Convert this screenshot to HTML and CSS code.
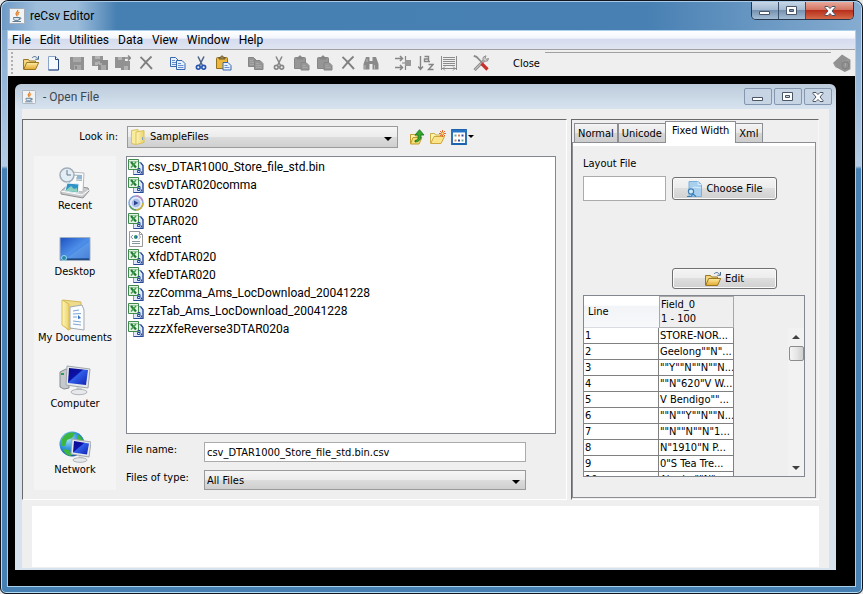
FILE: index.html
```html
<!DOCTYPE html>
<html lang="en">
<head>
  <meta charset="UTF-8"/>
  <meta name="viewport" content="width=device-width, initial-scale=1.0"/>
  <title>reCsv Editor</title>
  <link rel="stylesheet" href="styles.css">
</head>
<body>

<!-- shared icons -->
<svg class="defs" width="0" height="0" aria-hidden="true">
  <defs>
    <linearGradient id="gFolder" x1="0" y1="0" x2="0" y2="1"><stop offset="0" stop-color="#fdeea4"/><stop offset="1" stop-color="#e2a62c"/></linearGradient>
    <linearGradient id="gPale" x1="0" y1="0" x2="1" y2="0"><stop offset="0" stop-color="#fdf6bd"/><stop offset="1" stop-color="#ecd368"/></linearGradient>
    <linearGradient id="gScreen" x1="0" y1="0" x2="1" y2="1"><stop offset="0" stop-color="#1d4fc0"/><stop offset=".5" stop-color="#4d8fe8"/><stop offset="1" stop-color="#2a62c8"/></linearGradient>
    <linearGradient id="gNavy" x1="0" y1="0" x2="1" y2="1"><stop offset="0" stop-color="#0a0a8c"/><stop offset=".4" stop-color="#0d12a8"/><stop offset=".45" stop-color="#2f5fe8"/><stop offset="1" stop-color="#1220b4"/></linearGradient>
    <radialGradient id="gGlobe" cx=".35" cy=".3" r=".8"><stop offset="0" stop-color="#a8e4ff"/><stop offset=".5" stop-color="#2f92d8"/><stop offset="1" stop-color="#0b4c98"/></radialGradient>
    <linearGradient id="gGrey" x1="0" y1="0" x2="1" y2="1"><stop offset="0" stop-color="#fff"/><stop offset="1" stop-color="#b4b6ba"/></linearGradient>
  </defs>
  <symbol id="java" viewBox="0 0 16 16">
    <rect x=".5" y=".5" width="15" height="15" rx="1" fill="#f1f3f5" stroke="#a4adb6"/>
    <path d="M8.600 2c1.300 1.800-2.600 2.600-1.400 4.400.4.700 1 1.100.8 2M10.400 4.200c-1.800.9-2 1.700-1 2.800" fill="none" stroke="#e0791d" stroke-width="1.200"/>
    <path d="M4.500 9.500h6c0 2-.8 2.900-1.500 2.900H6c-1 0-1.500-1.300-1.500-2.900zM10.500 9.700c2-.6 2 1.700-.6 1.900M3.500 13.500h8.500" fill="#dfe8f0" stroke="#4f6f8c" stroke-width=".9"/>
  </symbol>
  <symbol id="open" viewBox="0 0 16 16">
    <path d="M.5 14V4.500h5l1 1.500h6v2" fill="#f4d67c" stroke="#9a7622"/>
    <path d="M.7 14.500l3-7h12l-3.200 7z" fill="url(#gFolder)" stroke="#9a7622"/>
    <path d="M9 3c1.500-2 4.500-2 5.500.6M15.500 1v3.300h-3.200" fill="none" stroke="#4d6f94"/>
  </symbol>
  <symbol id="new" viewBox="0 0 16 16">
    <path d="M2.500 1.500h7l3 3v10.500h-10z" fill="#f4f9ff" stroke="#8aa4cc"/>
    <path d="M9.500 1.500v3h3M12.500 4.500v10.500h-10" fill="none" stroke="#26457c"/>
  </symbol>
  <symbol id="save" viewBox="0 0 16 16">
    <path d="M1 2h14v13H2.500L1 13.500z" fill="#919191"/><path d="M4 2h8v5H4zM5 10h7v5H5z" fill="#a9a9a9"/><path d="M6 11h2v3H6z" fill="#888"/>
  </symbol>
  <symbol id="saveas" viewBox="0 0 16 16">
    <path d="M0 1h11v10H0z" fill="#949494"/><path d="M3 1h5v3H3zM3 7h3v3H3z" fill="#b4b4b4"/>
    <path d="M6 5h10v10H6z" fill="#8b8b8b"/><path d="M9 10h5v5H9z" fill="#aaa"/><path d="M7 6v3h3" fill="none" stroke="#ccc"/>
  </symbol>
  <symbol id="export" viewBox="0 0 16 16">
    <path d="M0 2h10v11H0zM6 6h9v9H6z" fill="#929292"/><path d="M3 2h4v3H3zM9 11h4v4H9z" fill="#b4b4b4"/>
    <path d="M9 3h6M13 .5L15.500 3 13 5.500" fill="none" stroke="#888" stroke-width="1.400"/>
  </symbol>
  <symbol id="del" viewBox="0 0 16 16">
    <path d="M2.500 2C6 5 10 9.500 14 14M13.500 1.500C9.500 5 6 9 2.500 13.500" fill="none" stroke="#808080" stroke-width="1.900"/>
  </symbol>
  <symbol id="copy" viewBox="0 0 16 16">
    <path class="sheet" d="M.5 2.500h5l3 3v6h-8z"/><path class="sheet" d="M6.500 5.500h5.500l3 3v6H6.500z"/>
    <path class="ink" d="M2 5.500h3M2 7.500h4M2 9.500h4M8 8.500h3M8 10.500h5.500M8 12.500h5.500"/>
  </symbol>
  <symbol id="cut" viewBox="0 0 16 16">
    <path class="blade" d="M5 1.500l4.500 9M11 1.500L6.500 10.500"/>
    <circle class="ring" cx="5.300" cy="12.300" r="1.900"/><circle class="ring" cx="10.700" cy="12.300" r="1.900"/>
  </symbol>
  <symbol id="paste" viewBox="0 0 16 16">
    <path class="board" d="M.5 3.500q0-1 1-1h9q1 0 1 1v10h-11z"/><path class="clip" d="M3 4V2.500h1.500C4.500.5 7.500.5 7.500 2.500H9V4z"/>
    <path class="sheet" d="M7 7.500h5l3 3v4.500H7z"/><path class="ink" d="M8.500 10.500h3M8.500 12.500h5"/>
  </symbol>
  <symbol id="find" viewBox="0 0 16 16">
    <path d="M3 2h3.500v4h3V2H13l2.500 7v5.500H9.500V9h-3v5.500H.5V9z" fill="#8a8a8a"/><path d="M2 10v4M11.500 10v4M4 4v3" stroke="#b8b8b8"/>
  </symbol>
  <symbol id="cols" viewBox="0 0 16 16">
    <path d="M0 3.500h7M5 1l2.500 2.500L5 6M0 12.500h7M5 10l2.500 2.500L5 15" fill="none" stroke="#858585" stroke-width="1.500"/>
    <path d="M10.500 1v14M7 8h9" stroke="#858585" stroke-width="1.200"/><path d="M10 5h6v6h-6z" fill="#999"/>
  </symbol>
  <symbol id="sort" viewBox="0 0 16 16">
    <path d="M2.500 1v13M0 11.500l2.500 3 2.500-3M6.500 1.500h4v5H6.500v-2.500h4M10.500 6.500h1.500M10.500 9.500h4.500l-4.500 5h5" fill="none" stroke="#858585" stroke-width="1.400"/>
  </symbol>
  <symbol id="lines" viewBox="0 0 16 16">
    <path d="M.5 1v14M15.500 1v14M2 2.500h12M2 4.500h12M2 6.500h12M2 8.500h12M2 10.500h12M1 13.500h14M4 11.500l-2 2 2 2M12 11.500l2 2-2 2" fill="none" stroke="#8c8c8c"/>
  </symbol>
  <symbol id="tools" viewBox="0 0 16 16">
    <path d="M1.500 15L11 5.500" stroke="#8c8c8c" stroke-width="3"/><path d="M1.800 14.700L11 5.500" stroke="#dadada"/>
    <path d="M10.500 2c-1.500 2.500.5 5 4 4l1-2.500-2.500.8-1-1L13 .8z" fill="#d8d8d8" stroke="#8c8c8c"/>
    <path d="M.8.800l2.700 1L9 7.500" fill="none" stroke="#8a8a8a" stroke-width="1.800"/><path d="M8.500 8.500l6 6" stroke="#c8302c" stroke-width="3.200"/>
  </symbol>
  <symbol id="tag" viewBox="0 0 16 16">
    <path d="M0 8l8-7.500 7.500 4.500v8.500l-5 2.500L3 12z" fill="#919191"/><path d="M8 7l7-2M3 12l-2-3" stroke="#9c9c9c"/><circle cx="11" cy="10" r="3" fill="none" stroke="#828282"/><path d="M11 8v3" stroke="#aaa"/>
  </symbol>
  <symbol id="folder" viewBox="0 0 16 16">
    <path d="M1.500 1.500L8 .5V13l-2 2.500-4.500-1z" fill="#f9ec9c" stroke="#d9c260"/>
    <path d="M6 3l8-1.500v12L6 15.500z" fill="url(#gPale)" stroke="#dcc258"/><path d="M12.500 8v3" stroke="#7fa3c0"/>
  </symbol>
  <symbol id="up" viewBox="0 0 16 16">
    <path d="M1.500 14V5.500h4l1 1.500h4v2" fill="#fdf3b0" stroke="#c39a2c"/><path d="M1.500 15l2.500-6.500h9l-3 6.500z" fill="#f8df76" stroke="#c39a2c"/>
    <path d="M6 11.500c3-.5 3.500-2 3-5.500H6L10.500.7 15 6h-3c.5 4-2 7-6 7z" fill="#35a52c" stroke="#14701a" stroke-width=".8"/>
  </symbol>
  <symbol id="newfolder" viewBox="0 0 16 16">
    <path d="M.5 14V4.500h4l1 1.500h6v2" fill="#fdf3b0" stroke="#d0ac48"/><path d="M.7 14.500L4 7.500h10.500l-3.500 7z" fill="#f9e48c" stroke="#d0a63c"/>
    <path d="M12.500 1v7M9 4.500h7M10 2l5 5M15 2l-5 5" stroke="#e0642c"/><circle cx="12.500" cy="4.500" r="1.200" fill="#ffe27a"/>
  </symbol>
  <symbol id="view" viewBox="0 0 16 16">
    <path d="M1 1h14v14H1z" fill="#fff" stroke="#1b63ae" stroke-width="1.800"/><path d="M1 1h14v2.500H1z" fill="#2674c4"/>
    <path d="M3.500 6.500h2M10.500 11.500h2" stroke="#6a9" stroke-width="2"/><path d="M7 6.500h2M3.500 11.500h2" stroke="#d77f5a" stroke-width="2"/><path d="M10.500 6.500h2M7 11.500h2" stroke="#2f4f9c" stroke-width="2"/>
  </symbol>
  <symbol id="csv" viewBox="0 0 16 16">
    <path d="M5.500 3.500h7l2.500 3v9H5.500z" fill="#dfe9fa" stroke="#7d9ad0"/><path d="M12.500 3.500l2.500 3v9H5.500" fill="none" stroke="#2c4a94" stroke-width="1.200"/>
    <path d="M.5.500h10v10H.5z" fill="#e6f3e4" stroke="#3f8a4c"/><path d="M1 2.500h9" stroke="#9ccaa0"/>
    <path d="M3 3l5 5.500" stroke="#1f7a33" stroke-width="2.200"/><path d="M8 3L3 8.500" stroke="#46a052" stroke-width="1.500"/>
    <path d="M9.500 9.500h2.500v4H9.500v-2h2.500M13.500 12.500v1.500l-1 1" fill="none" stroke="#24499c"/>
  </symbol>
  <symbol id="media" viewBox="0 0 16 16">
    <circle cx="8" cy="8" r="7" fill="#e4ebf8" stroke="#7d9fd8" stroke-width="1.500"/>
    <path d="M8 1a7 7 0 0 1 6.500 4.500" fill="none" stroke="#c48cc4" stroke-width="1.500"/><path d="M15 8a7 7 0 0 1-7 7" fill="none" stroke="#c8b830" stroke-width="1.500"/><path d="M8 15a7 7 0 0 1-6-4" fill="none" stroke="#58a458" stroke-width="1.500"/>
    <circle cx="8" cy="8" r="4.300" fill="#a9bde8"/><path d="M6 5.500l4.500 2.500-4.500 2.500z" fill="#2d4590"/>
  </symbol>
  <symbol id="xml" viewBox="0 0 16 16">
    <path d="M1.500.5h10l3 3v12h-13z" fill="#fff" stroke="#999"/><path d="M11.500.5v3h3" fill="none" stroke="#999"/>
    <path d="M5 4L2.800 6 5 8M10.500 4l2.200 2-2.200 2M4 10.500h8M4 12.500h8" fill="none" stroke="#8a9aa4"/><circle cx="7.800" cy="6" r="1.900" fill="#2f9c72"/><circle cx="8.500" cy="6" r=".9" fill="#2a59a8"/>
  </symbol>
  <symbol id="pick" viewBox="0 0 16 16">
    <path d="M3 .5h9l3.500 3v12H3z" fill="#a8d0ee" stroke="#7cb0d8"/><path d="M12 .5v3h3.500M3 10l5-4 7 1" fill="none" stroke="#d8edfa"/>
    <circle cx="5" cy="10.500" r="2.600" fill="#d4eafa" stroke="#3d7fb4" stroke-width="1.200"/><path d="M1 15.500h4l2-2.500 3 2.500" fill="none" stroke="#3d7fb4" stroke-width="1.200"/>
  </symbol>
  <symbol id="recent" viewBox="0 0 32 32">
    <path d="M2 24l7-6 20 3 1 3-6 7L2 27z" fill="#c9cacc" stroke="#8f9194"/><path d="M2 24l21 4 7-5" fill="none" stroke="#fff"/>
    <path d="M11 5l14 1-1 19-14-2z" fill="#fbfbfc" stroke="#b4b8bd"/><path d="M14 8l9 .5M17 11l6 .4M17 13l6 .4" stroke="#9aa"/><path d="M18 8l5 .5v4l-5-.5z" fill="#8fb7d8"/>
    <circle cx="8" cy="8" r="7" fill="#e3edf4" stroke="#a0adb8" stroke-width="1.500"/><path d="M8 3v5h4" fill="none" stroke="#62788a"/>
    <path d="M8 16l12 1-1 9-13-2z" fill="#2f93c8" stroke="#eef4f8"/><path d="M7 23l5-4 3 3 3-1v4l-12-1z" fill="#8fd0bc"/>
  </symbol>
  <symbol id="desktop" viewBox="0 0 32 32">
    <path d="M1 4.500h30v23H1z" fill="url(#gScreen)" stroke="#9fb0c4"/><path d="M2 25.500h28v1.500H2z" fill="#24497c"/><path d="M8 25l22-16v16z" fill="#7db4f2" opacity=".35"/>
    <circle cx="5" cy="25" r="2.500" fill="#2a86a8" stroke="#9ddcec"/>
  </symbol>
  <symbol id="docs" viewBox="0 0 32 32">
    <path d="M4 1l18 2v22L9 31l-5-5z" fill="#efdc8a" stroke="#d4b85a"/><path d="M11 8l12-2 2 5v20l-14-2z" fill="#fafcfe" stroke="#a3aab4"/>
    <path d="M14 12l6-1M14 15l8-.5M14 18l4 0M14 22l8 1M14 25l8 1" stroke="#7fa6d4"/><path d="M19 16l3 3-3 1z" fill="#2f73c0"/>
    <path d="M3 1l7 4v26l-7-5z" fill="url(#gPale)" stroke="#d8bc55"/>
  </symbol>
  <symbol id="computer" viewBox="0 0 32 32">
    <path d="M1 7l6-3 3 1v18l-5 1-4-2z" fill="#c6c9cc" stroke="#898d92"/><path d="M2 9h3" stroke="#2b9c50" stroke-width="2"/>
    <path d="M8 1l23 3-2 19-22-3z" fill="#e4e8ec" stroke="#a2a7ad"/><path d="M10 3l19 2-2 15-18-2z" fill="url(#gNavy)"/>
    <path d="M18 22l5 1-1 3h-6z" fill="#c8cbd0"/><ellipse cx="20" cy="27" rx="8" ry="2.700" fill="#e6e8ea" stroke="#b0b4b8"/>
  </symbol>
  <symbol id="network" viewBox="0 0 32 32">
    <circle cx="13" cy="13" r="12.500" fill="url(#gGlobe)"/><path d="M3 8c4-7 9-7 13-6l-3 5-5 2-2 6-4 0zM4 18l6 1 3 5-2 1c-4-1-6-4-7-7zM18 3c4 2 6 5 7 8l-6-2z" fill="#3eb53c"/>
    <path d="M13 8l19 3-2 15-18-3z" fill="#e4e8ec" stroke="#a2a7ad"/><path d="M15 10l15 2.500-2 11-14-2z" fill="url(#gNavy)"/>
    <path d="M20 25l4 1v2h-5z" fill="#c8cbd0"/><ellipse cx="21" cy="29" rx="7" ry="2.300" fill="#e6e8ea" stroke="#b0b4b8"/>
  </symbol>
  <symbol id="wmin" viewBox="0 0 14 12"><path d="M1.500 6.500h10v3h-10z" fill="#fff" stroke="#4a5568"/></symbol>
  <symbol id="wmax" viewBox="0 0 14 12"><path d="M1.500 1.500h10v8h-10zM4.500 4.500v2h4v-2z" fill="#fff" fill-rule="evenodd" stroke="#4a5568"/></symbol>
  <symbol id="wclose" viewBox="0 0 14 12"><path d="M2 1.500h3l2 2 2-2h3v1L9 6l3 3.500v1H9l-2-2-2 2H2v-1L5 6 2 2.500z" fill="#fff" stroke="#4a5568"/></symbol>
</svg>

<div class="window">
  <header class="titlebar">
    <svg class="icon"><use href="#java"/></svg>
    <h1>reCsv Editor</h1>
    <div class="win-buttons">
      <button aria-label="Minimize"><svg><use href="#wmin"/></svg></button>
      <button aria-label="Maximize"><svg><use href="#wmax"/></svg></button>
      <button class="close" aria-label="Close window"><svg><use href="#wclose"/></svg></button>
    </div>
  </header>

  <div class="client">
    <nav class="menubar">
      <button>File</button>
      <button>Edit</button>
      <button>Utilities</button>
      <button>Data</button>
      <button>View</button>
      <button>Window</button>
      <button>Help</button>
    </nav>

    <div class="toolbar">
      <span class="grip"></span>
      <div class="group">
        <button aria-label="Open"><svg class="icon"><use href="#open"/></svg></button>
        <button aria-label="New"><svg class="icon"><use href="#new"/></svg></button>
        <button aria-label="Save" disabled><svg class="icon"><use href="#save"/></svg></button>
        <button aria-label="Save as" disabled><svg class="icon"><use href="#saveas"/></svg></button>
        <button aria-label="Export" disabled><svg class="icon"><use href="#export"/></svg></button>
        <button aria-label="Delete" disabled><svg class="icon"><use href="#del"/></svg></button>
      </div>
      <div class="group">
        <button aria-label="Copy"><svg class="icon"><use href="#copy"/></svg></button>
        <button aria-label="Cut"><svg class="icon"><use href="#cut"/></svg></button>
        <button aria-label="Paste"><svg class="icon"><use href="#paste"/></svg></button>
      </div>
      <div class="group">
        <button aria-label="Copy records" disabled><svg class="icon"><use href="#copy"/></svg></button>
        <button aria-label="Cut records" disabled><svg class="icon"><use href="#cut"/></svg></button>
        <button aria-label="Paste records" disabled><svg class="icon"><use href="#paste"/></svg></button>
        <button aria-label="Paste records before" disabled><svg class="icon"><use href="#paste"/></svg></button>
        <button aria-label="Delete records" disabled><svg class="icon"><use href="#del"/></svg></button>
        <button aria-label="Find" disabled><svg class="icon"><use href="#find"/></svg></button>
      </div>
      <div class="group">
        <button aria-label="Filter" disabled><svg class="icon"><use href="#cols"/></svg></button>
        <button aria-label="Sort" disabled><svg class="icon"><use href="#sort"/></svg></button>
        <button aria-label="Column widths" disabled><svg class="icon"><use href="#lines"/></svg></button>
      </div>
      <div class="group">
        <button aria-label="Preferences"><svg class="icon"><use href="#tools"/></svg></button>
      </div>
      <button class="text-button">Close</button>
      <span class="rule"></span>
      <svg class="icon tag"><use href="#tag"/></svg>
    </div>

    <main class="desktop">
      <section class="frame">
        <div class="frame-title">
          <svg class="icon"><use href="#java"/></svg>
          <h2>- Open File</h2>
          <div class="frame-buttons">
            <button aria-label="Minimize frame"><svg><use href="#wmin"/></svg></button>
            <button aria-label="Maximize frame"><svg><use href="#wmax"/></svg></button>
            <button aria-label="Close frame"><svg><use href="#wclose"/></svg></button>
          </div>
        </div>

        <div class="frame-body">
          <div class="split">
            <form class="chooser">
              <div class="look-row">
                <label for="look">Look in:</label>
                <div class="combo look">
                  <svg class="icon"><use href="#folder"/></svg>
                  <select id="look"><option>SampleFiles</option></select>
                </div>
                <div class="look-tools">
                  <button type="button" aria-label="Up one level"><svg class="icon"><use href="#up"/></svg></button>
                  <button type="button" aria-label="New folder"><svg class="icon"><use href="#newfolder"/></svg></button>
                  <button type="button" class="view" aria-label="View menu"><svg class="icon"><use href="#view"/></svg></button>
                </div>
              </div>

              <div class="places">
                <a href="#"><svg><use href="#recent"/></svg>Recent</a>
                <a href="#"><svg><use href="#desktop"/></svg>Desktop</a>
                <a href="#"><svg><use href="#docs"/></svg>My Documents</a>
                <a href="#"><svg><use href="#computer"/></svg>Computer</a>
                <a href="#"><svg><use href="#network"/></svg>Network</a>
              </div>

              <ul class="files">
                <li><svg class="icon"><use href="#csv"/></svg>csv_DTAR1000_Store_file_std.bin</li>
                <li><svg class="icon"><use href="#csv"/></svg>csvDTAR020comma</li>
                <li><svg class="icon"><use href="#media"/></svg>DTAR020</li>
                <li><svg class="icon"><use href="#csv"/></svg>DTAR020</li>
                <li><svg class="icon"><use href="#xml"/></svg>recent</li>
                <li><svg class="icon"><use href="#csv"/></svg>XfdDTAR020</li>
                <li><svg class="icon"><use href="#csv"/></svg>XfeDTAR020</li>
                <li><svg class="icon"><use href="#csv"/></svg>zzComma_Ams_LocDownload_20041228</li>
                <li><svg class="icon"><use href="#csv"/></svg>zzTab_Ams_LocDownload_20041228</li>
                <li><svg class="icon"><use href="#csv"/></svg>zzzXfeReverse3DTAR020a</li>
              </ul>

              <div class="fields">
                <label for="fname">File name:</label>
                <input id="fname" type="text" value="csv_DTAR1000_Store_file_std.bin.csv">
                <label for="ftype">Files of type:</label>
                <div class="combo">
                  <select id="ftype"><option>All Files</option></select>
                </div>
              </div>
            </form>

            <div class="options">
              <div class="tabs" role="tablist">
                <button role="tab">Normal</button>
                <button role="tab">Unicode</button>
                <button role="tab" class="active" aria-selected="true">Fixed Width</button>
                <button role="tab">Xml</button>
              </div>
              <div class="tab-pane">
                <label for="layout">Layout File</label>
                <div class="layout-row">
                  <input id="layout" type="text">
                  <button class="push"><svg class="icon"><use href="#pick"/></svg>Choose File</button>
                </div>
                <div class="edit-row">
                  <button class="push edit"><svg class="icon"><use href="#open"/></svg>Edit</button>
                </div>

                <div class="preview">
                  <table>
                    <thead>
                      <tr><th>Line</th><th class="field">Field_0<br>1 - 100</th></tr>
                    </thead>
                    <tbody>
                      <tr><td>1</td><td>STORE-NOR...</td></tr>
                      <tr><td>2</td><td>Geelong""N"...</td></tr>
                      <tr><td>3</td><td>""Y""N""N""N...</td></tr>
                      <tr><td>4</td><td>""N"620"V W...</td></tr>
                      <tr><td>5</td><td>V Bendigo""...</td></tr>
                      <tr><td>6</td><td>""N""Y""N""N...</td></tr>
                      <tr><td>7</td><td>""N""N""N"1...</td></tr>
                      <tr><td>8</td><td>N"1910"N P...</td></tr>
                      <tr><td>9</td><td>0"S Tea Tre...</td></tr>
                      <tr><td>10</td><td>Akorba""N"...</td></tr>
                    </tbody>
                  </table>
                  <div class="scrollbar">
                    <span class="arrow up"></span>
                    <span class="thumb"></span>
                    <span class="arrow down"></span>
                  </div>
                </div>
              </div>
            </div>
          </div>
          <div class="messages"></div>
        </div>
      </section>
    </main>
  </div>
</div>

</body>
</html>
```

FILE: styles.css
```css
* {
  box-sizing: border-box;
}

body {
  margin: 0;
  background: #e8e8e8;
  font-family: "DejaVu Sans Condensed", "Liberation Sans", sans-serif;
  font-size: 11px;
  color: #000;
}

button, input, select {
  font: inherit;
  color: inherit;
}

button {
  padding: 0;
  border: none;
  background: none;
}

h1, h2, ul {
  margin: 0;
  padding: 0;
  font-weight: normal;
}

.defs {
  position: absolute;
}

.icon {
  width: 16px;
  height: 16px;
  flex: none;
}

/* main window */
.window {
  display: flex;
  flex-direction: column;
  height: 100vh;
  min-height: 594px;
  padding: 0 6px 6px;
  border: 1px solid #10151f;
  border-radius: 8px 8px 6px 6px;
  background: linear-gradient(to bottom, #7ba3cc 0, #b4cce4 165px, #467fb2 168px, #467fb2 100%);
  box-shadow: inset 0 0 0 1px #b4dcf4;
}

.titlebar {
  display: flex;
  align-items: center;
  height: 29px;
  margin: 0 -5px;
  padding: 0 7px 0 7px;
  gap: 5px;
  border-top: 1px solid #a8cce8;
  border-radius: 7px 7px 0 0;
  background: linear-gradient(to right, #6f9ac6 0, #9dbddb 35px, #9dbddb 75px, #467fb2 115px, #4880b3 75%, #86acd0 100%);
  flex: none;
}

.titlebar h1 {
  flex: 1;
  font-family: Roboto, "Open Sans", sans-serif;
  font-size: 12px;
}

.win-buttons {
  display: flex;
  align-self: flex-start;
  border: 1px solid #26364c;
  border-top: none;
  border-radius: 0 0 5px 5px;
  overflow: hidden;
}

.win-buttons button {
  display: flex;
  align-items: center;
  justify-content: center;
  width: 27px;
  height: 17px;
  border-right: 1px solid #3b5068;
  background: linear-gradient(to bottom, #c6d6e6 0, #a2b9d0 48%, #7592b0 50%, #a4bdd6 100%);
}

.win-buttons .close {
  width: 47px;
  border-right: none;
  background: linear-gradient(to bottom, #e8aa9c 0, #d2705e 48%, #b8301c 50%, #d46a48 100%);
}

.win-buttons svg, .frame-buttons svg {
  width: 14px;
  height: 12px;
}

.client {
  display: flex;
  flex-direction: column;
  flex: 1;
  min-height: 0;
  border: 1px solid #1d3854;
  outline: 1px solid #a8d0ec;
  outline-offset: -1px;
  background: #efefef;
}

.menubar {
  display: flex;
  gap: 9px;
  height: 19px;
  padding: 0 4px;
  background: linear-gradient(to bottom, #fff 0, #f2f5fb 40%, #d5dcef 45%, #e0e4f2 100%);
  border-bottom: 1px solid #a0a0a0;
  font-family: Roboto, "Open Sans", sans-serif;
  font-size: 12px;
  line-height: 18px;
  flex: none;
}

/* toolbar */
.toolbar {
  display: flex;
  align-items: center;
  gap: 9px;
  height: 26px;
  padding-right: 4px;
  background: #efefef;
  flex: none;
}

.toolbar .group {
  display: flex;
}

.toolbar .group button {
  display: flex;
  justify-content: center;
  width: 23px;
}

.grip {
  width: 3px;
  height: 22px;
  margin-left: 3px;
  margin-right: -4px;
  border-left: 2px dotted #b0b0b0;
}

.text-button {
  margin: 0 -4px 0 12px;
}

.rule {
  flex: 1;
  align-self: flex-start;
  height: 1px;
  margin-top: 2px;
  margin-right: -7px;
  background: #a0a0a0;
}

.tag {
  width: 18px;
  height: 18px;
}

.sheet { fill: var(--sheet, #e6f0fc); stroke: var(--edge, #3a68b0); }
.ink { stroke: var(--ink, #6a90cc); fill: none; }
.blade { fill: none; stroke: var(--edge, #4c6288); stroke-width: 1.5px; }
.ring { fill: none; stroke: var(--edge, #2454b0); stroke-width: 1.6px; }
.board { fill: var(--sheet, #ecb83c); stroke: var(--edge, #94701e); }
.clip { fill: var(--edge, #a08850); stroke: var(--edge, #6c5a30); }

button:disabled {
  --sheet: #969696;
  --edge: #868686;
  --ink: #a8a8a8;
}

/* internal frame */
.desktop {
  display: flex;
  flex: 1;
  min-height: 0;
  padding: 8px 19px 16px 7px;
  background: #000;
}

.frame {
  display: flex;
  flex-direction: column;
  flex: 1;
  min-width: 0;
  padding: 0 7px 2px;
  border-radius: 6px 6px 0 0;
  background: linear-gradient(to bottom, #bccbdb 0, #d8e4f0 26px, #d6e3ef 100%);
}

.frame-title {
  display: flex;
  align-items: center;
  gap: 8px;
  height: 25px;
  flex: none;
}

.frame-title .icon {
  width: 14px;
  height: 14px;
  margin-right: -1px;
}

.frame-title h2 {
  flex: 1;
  font-family: Roboto, "Open Sans", sans-serif;
  font-size: 12px;
  color: #3c4650;
}

.frame-buttons {
  display: flex;
  gap: 2px;
  margin-right: -3px;
}

.frame-buttons button {
  display: flex;
  align-items: center;
  justify-content: center;
  width: 28px;
  height: 17px;
  border: 1px solid #8496b0;
  border-radius: 2px;
  background: #c6d4e4;
}

.frame-body {
  display: flex;
  flex-direction: column;
  flex: 1;
  min-height: 0;
  gap: 6px;
  padding: 10px 10px 1px 0;
  background: #efefef;
}

.split {
  display: flex;
  gap: 4px;
  flex: 1;
  min-height: 0;
}

.messages {
  height: 61px;
  margin-left: 10px;
  background: #fff;
  flex: none;
}

/* file chooser */
.chooser {
  display: grid;
  grid-template-columns: 82px 1fr;
  grid-template-rows: 23px 1fr 48px;
  column-gap: 10px;
  row-gap: 8px;
  flex: 1;
  min-width: 0;
  padding: 5px 10px 9px 11px;
  border: 1px solid #696969;
  border-right-color: #fff;
  border-bottom-color: #fff;
}

.look-row {
  grid-column: 1 / 3;
  display: flex;
  align-items: center;
  gap: 9px;
}

.look-row label {
  width: 84px;
  text-align: right;
}

.combo {
  position: relative;
  display: flex;
  align-items: center;
  border: 1px solid #9a9a9a;
  background: linear-gradient(to bottom, #f6f6f6 0, #ebebeb 50%, #dcdcdc 52%, #cfcfcf 100%);
}

.combo.look {
  width: 271px;
  height: 22px;
  padding-left: 2px;
}

.combo::after {
  content: "";
  position: absolute;
  right: 5px;
  top: 50%;
  border: 4px solid transparent;
  border-top-color: #000;
  border-bottom: none;
  pointer-events: none;
}

.combo select {
  flex: 1;
  height: 100%;
  padding: 0 16px 0 2px;
  border: none;
  background: none;
  appearance: none;
}

.combo.look select {
  padding-left: 4px;
}

.look-tools {
  display: flex;
  gap: 5px;
  margin-left: 2px;
}

.look-tools button {
  display: flex;
  align-items: center;
}

.look-tools .view::after {
  content: "";
  margin-left: 1px;
  border: 3px solid transparent;
  border-top-color: #000;
  border-bottom: none;
}

.places {
  grid-row: 2 / 4;
  display: flex;
  flex-direction: column;
  gap: 20px;
  padding-top: 11px;
  background: #f4f4f4;
}

.places a {
  display: flex;
  flex-direction: column;
  align-items: center;
  height: 46px;
  color: #000;
  line-height: 14px;
  text-decoration: none;
  white-space: nowrap;
}

.places svg {
  width: 32px;
  height: 32px;
  flex: none;
}

.files {
  min-height: 0;
  padding: 1px;
  border: 1px solid #828790;
  background: #fff;
  list-style: none;
  overflow: hidden;
  font-family: Roboto, "Open Sans", sans-serif;
  font-size: 12px;
}

.files li {
  display: flex;
  align-items: center;
  gap: 4px;
  height: 18px;
  line-height: 18px;
}

.fields {
  display: grid;
  grid-template-columns: 78px 322px;
  grid-template-rows: 20px 20px;
  row-gap: 8px;
}

.fields label {
  line-height: 16px;
}

.fields input, .layout-row input {
  min-width: 0;
  padding: 0 2px;
  border: 1px solid #ababab;
  background: #fff;
}

/* right hand options */
.options {
  display: flex;
  flex-direction: column;
  width: 248px;
  padding: 1px 2px 1px 0;
  border: 1px solid #696969;
  border-right-color: #f8f8f8;
  border-bottom-color: #fff;
}

.tabs {
  display: flex;
  align-items: flex-end;
  height: 21px;
  padding-left: 2px;
  flex: none;
}

.tabs button {
  height: 19px;
  padding: 0 3px;
  border: 1px solid #8c8e94;
  border-bottom: none;
  background: linear-gradient(to bottom, #f4f4f4 0, #e8e8e8 50%, #d6d6d6 52%, #cdcdcd 100%);
}

.tabs .active {
  z-index: 1;
  height: 22px;
  margin: 0 -1px -1px;
  padding: 0 6px 4px;
  background: #fff;
}

.tab-pane {
  display: flex;
  flex-direction: column;
  flex: 1;
  min-height: 0;
  padding: 13px 10px 20px;
  border: 1px solid #8c8e94;
  box-shadow: inset 0 3px #fff;
}

.tab-pane > label {
  line-height: 16px;
}

.layout-row {
  display: flex;
  align-items: center;
  gap: 6px;
  margin-top: 4px;
}

.layout-row input {
  width: 83px;
  height: 25px;
}

.push {
  display: flex;
  align-items: center;
  justify-content: center;
  gap: 4px;
  width: 105px;
  height: 23px;
  border: 1px solid #707070;
  border-radius: 3px;
  background: linear-gradient(to bottom, #f4f4f4 0, #ececec 48%, #dedede 50%, #d0d0d0 100%);
  box-shadow: inset 0 0 0 1px #fafafa;
}

.push.edit {
  height: 21px;
}

.edit-row {
  display: flex;
  margin: 67px 0 6px;
  padding-left: 89px;
}

.preview {
  display: flex;
  justify-content: space-between;
  flex: 1;
  min-height: 0;
  border: 1px solid #828790;
  overflow: hidden;
}

.preview table {
  width: 150px;
  height: max-content;
  table-layout: fixed;
  border-collapse: separate;
  border-spacing: 0;
}

.preview th {
  height: 32px;
  padding: 0 4px;
  border-bottom: 1px solid #d8dce2;
  background: linear-gradient(to bottom, #fff 0, #fff 30%, #f2f4f7 32%, #f6f8fa 100%);
  font-weight: normal;
  text-align: left;
  line-height: 14px;
}

.preview th.field {
  padding: 0 1px;
  border: 1px solid #a8a8a8;
  background: #efefef;
}

.preview td {
  height: 16px;
  padding: 0 0 0 1px;
  border-right: 1px solid #808080;
  border-bottom: 1px solid #808080;
  background: #fff;
  line-height: 15px;
  white-space: nowrap;
  overflow: hidden;
}

.scrollbar {
  display: flex;
  flex-direction: column;
  align-items: center;
  width: 16px;
  margin-top: 32px;
  padding-bottom: 6px;
  background: #f2f2f2;
}

.arrow {
  border: 4px solid transparent;
}

.arrow.up {
  margin: 7px 0 7px;
  border-top: none;
  border-bottom-color: #404040;
}

.arrow.down {
  margin-top: auto;
  border-bottom: none;
  border-top-color: #404040;
}

.thumb {
  width: 15px;
  height: 15px;
  border: 1px solid #8c8c8c;
  border-radius: 2px;
  background: linear-gradient(to right, #f4f4f4 0, #e6e6e6 50%, #cfcfcf 100%);
}
```
